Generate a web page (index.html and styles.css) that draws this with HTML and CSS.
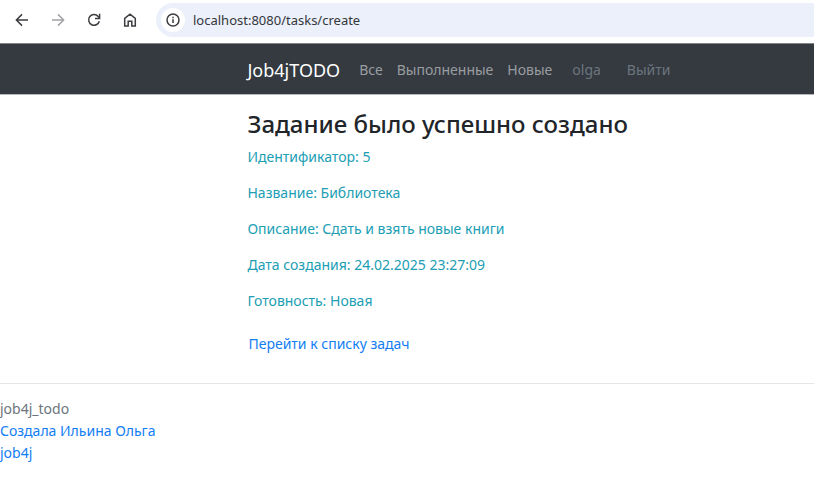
FILE: index.html
```html
<!DOCTYPE html>
<html lang="ru">
<head>
<meta charset="utf-8">
<meta name="viewport" content="width=device-width, initial-scale=1">
<title>Job4jTODO</title>
<link rel="stylesheet" href="styles.css">
</head>
<body>
<div class="browser-bar">
  <button class="tool" type="button" aria-label="Назад"><svg viewBox="0 0 16 16"><path d="M14 8H2.6M8 2.4 2.4 8 8 13.6"/></svg></button>
  <button class="tool tool-off" type="button" aria-label="Вперёд" disabled><svg viewBox="0 0 16 16"><path d="M2 8h11.4M8 2.4 13.6 8 8 13.6"/></svg></button>
  <button class="tool" type="button" aria-label="Обновить"><svg viewBox="0 0 16 16"><path d="M13.3 9.2A5.4 5.4 0 1 1 12.2 4.4L13.4 6"/><path d="M13.6 1.8v4.6H9"/></svg></button>
  <button class="tool" type="button" aria-label="Домой"><svg viewBox="0 0 16 16"><path d="M2.7 14V6.3L8 2.2l5.3 4.1V14H9.8V9.2H6.2V14z"/></svg></button>
  <div class="address">
    <button class="info" type="button" aria-label="Сведения о сайте"><svg viewBox="0 0 16 16"><circle cx="8" cy="8" r="6"/><path d="M8 7.3v3.8M8 4.7v1.5"/></svg></button>
    <input class="url" type="text" aria-label="Адрес" value="localhost:8080/tasks/create">
  </div>
</div>
<nav class="navbar">
  <a class="brand" href="#">Job4jTODO</a>
  <a class="nav-link" href="#">Все</a>
  <a class="nav-link" href="#">Выполненные</a>
  <a class="nav-link" href="#">Новые</a>
  <a class="nav-link user" href="#">olga</a>
  <a class="nav-link user" href="#">Выйти</a>
</nav>
<main class="content">
  <h1>Задание было успешно создано</h1>
  <p>Идентификатор: 5</p>
  <p>Название: Библиотека</p>
  <p>Описание: Сдать и взять новые книги</p>
  <p>Дата создания: 24.02.2025 23:27:09</p>
  <p>Готовность: Новая</p>
  <a class="list-link" href="#">Перейти к списку задач</a>
</main>
<footer class="footer">
  <span>job4j_todo</span>
  <a href="#">Создала Ильина Ольга</a>
  <a href="#">job4j</a>
</footer>
</body>
</html>
```
FILE: styles.css
```css
* {
  box-sizing: border-box;
}

body {
  margin: 0;
  padding-right: 2px;
  background: #fff;
  font: 14px/22px "Noto Sans", "Segoe UI", sans-serif;
  color: #212529;
}

a {
  color: #127df4;
  text-decoration: none;
}

button {
  border: 0;
  padding: 0;
  background: none;
}

svg {
  display: block;
  width: 16px;
  height: 16px;
  fill: none;
  stroke: #3c3d40;
  stroke-width: 1.5;
}

.browser-bar {
  display: flex;
  align-items: center;
  gap: 20px;
  height: 43px;
  padding: 0 0 4px 14px;
}

.tool-off svg {
  stroke: #a2a3a5;
}

.address {
  display: flex;
  flex: 1;
  align-items: center;
  gap: 8px;
  height: 34px;
  margin-left: -2px;
  padding-left: 5px;
  border-radius: 17px 0 0 17px;
  background: #ebf0fa;
}

.info {
  display: grid;
  place-items: center;
  width: 24px;
  height: 24px;
  border-radius: 50%;
  background: #fff;
}

.url {
  flex: 1;
  min-width: 0;
  border: 0;
  padding: 0;
  background: none;
  font: inherit;
  font-size: 13px;
  color: #34373b;
  outline: 0;
}

.navbar {
  display: flex;
  align-items: center;
  height: 52px;
  padding: 2px 0 0 30.4%;
  border-top: 1px solid #7f8489;
  border-bottom: 1px solid #b5b8bb;
  background: #343a40;
}

.brand {
  margin-right: 12px;
  font-size: 18px;
  color: #fff;
}

.nav-link {
  padding: 0 7px;
  color: #9a9da0;
}

.user {
  margin: 0 6px;
  color: #6c757d;
}

.content {
  padding: 11px 0 28px 30.4%;
}

h1 {
  margin: 0 0 4px;
  font-size: 24px;
  font-weight: 500;
  line-height: 36px;
}

p {
  margin: 0 0 14px;
  color: #209eb4;
}

.list-link {
  display: inline-block;
  padding: 7px 0 0 1px;
}

.footer {
  display: flex;
  flex-direction: column;
  align-items: flex-start;
  padding-top: 14px;
  border-top: 1px solid #e5e5e5;
  color: #6c757d;
}
```
